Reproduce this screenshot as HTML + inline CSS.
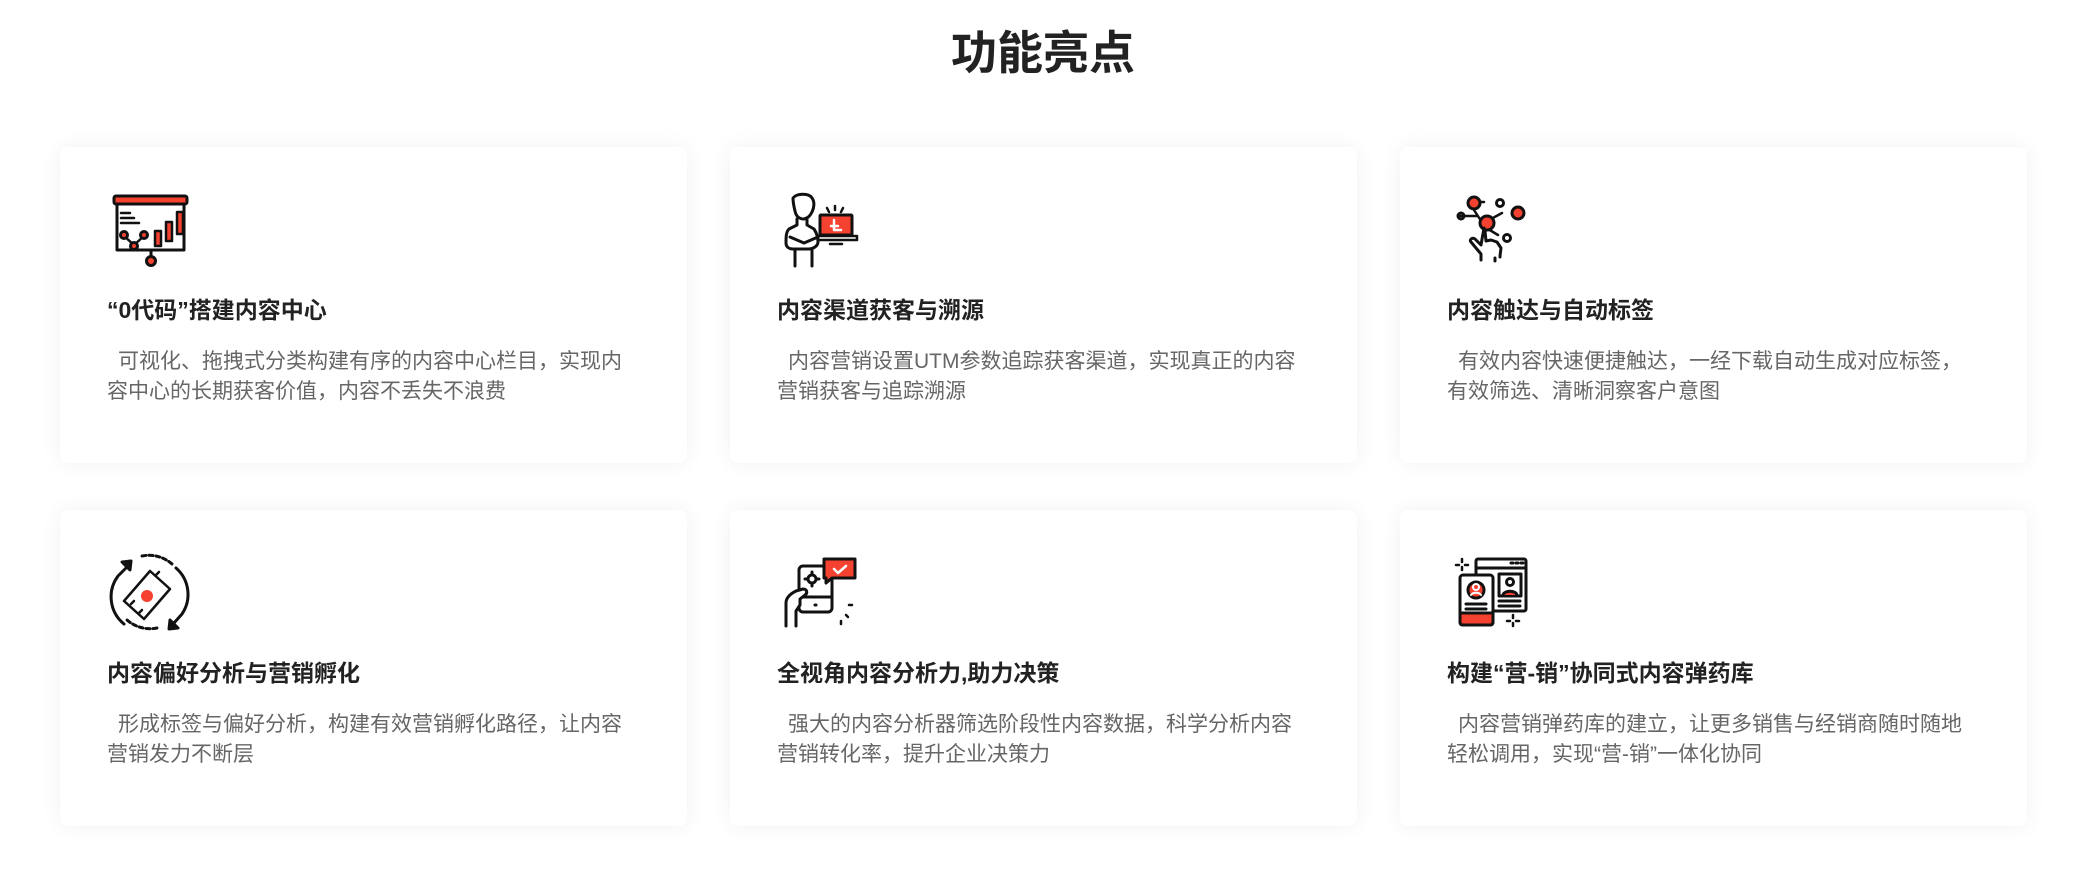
<!DOCTYPE html>
<html><head><meta charset="utf-8"><style>
*{margin:0;padding:0;box-sizing:border-box}
body{width:2086px;height:882px;background:#fff;position:relative;overflow:hidden;font-family:"Liberation Sans","Noto Sans CJK SC",sans-serif}
h1{position:absolute;left:0;width:2086px;top:24px;text-align:center;font-size:46px;font-weight:bold;color:#222;line-height:58px}
.card{position:absolute;width:627px;height:316px;background:#fff;border-radius:8px;box-shadow:0 0 22px rgba(0,0,0,0.06)}
.t{position:absolute;left:47px;top:148px;font-size:23px;font-weight:bold;color:#222;line-height:30px;white-space:nowrap}
.d{position:absolute;left:47px;top:200px;width:535px;font-size:21px;color:#666;line-height:30px;text-indent:11px}
svg.ic{position:absolute;left:0;top:0}
</style></head><body>
<h1>功能亮点</h1>
<div class="card" style="left:60px;top:147px"><div class="t">“0代码”搭建内容中心</div><div class="d">可视化、拖拽式分类构建有序的内容中心栏目，实现内容中心的长期获客价值，内容不丢失不浪费</div></div>
<div class="card" style="left:730px;top:147px"><div class="t">内容渠道获客与溯源</div><div class="d">内容营销设置UTM参数追踪获客渠道，实现真正的内容营销获客与追踪溯源</div></div>
<div class="card" style="left:1400px;top:147px"><div class="t">内容触达与自动标签</div><div class="d">有效内容快速便捷触达，一经下载自动生成对应标签，有效筛选、清晰洞察客户意图</div></div>
<div class="card" style="left:60px;top:510px"><div class="t">内容偏好分析与营销孵化</div><div class="d">形成标签与偏好分析，构建有效营销孵化路径，让内容营销发力不断层</div></div>
<div class="card" style="left:730px;top:510px"><div class="t">全视角内容分析力,助力决策</div><div class="d">强大的内容分析器筛选阶段性内容数据，科学分析内容营销转化率，提升企业决策力</div></div>
<div class="card" style="left:1400px;top:510px"><div class="t">构建“营-销”协同式内容弹药库</div><div class="d">内容营销弹药库的建立，让更多销售与经销商随时随地轻松调用，实现“营-销”一体化协同</div></div>

<svg class="ic" width="2086" height="882" fill="none" stroke="#111" stroke-width="3" stroke-linecap="round" stroke-linejoin="round">
<!-- icon1 -->
<rect x="114" y="196" width="73" height="8" rx="2" fill="#f5412f"/>
<path d="M117 204V250H184V204M151 250v7"/>
<path d="M121 213h9M121 218h13M121 223h18" stroke-width="2.5"/>
<path d="M124 236l10 9 10-9" stroke-width="2.5"/>
<circle cx="124" cy="235" r="3.5" fill="#f5412f"/><circle cx="134" cy="246" r="3.5" fill="#f5412f"/><circle cx="144" cy="235" r="3.5" fill="#f5412f"/>
<rect x="155" y="231" width="6" height="15" fill="#f5412f" stroke-width="2.5"/>
<rect x="166" y="222" width="6" height="19" fill="#f5412f" stroke-width="2.5"/>
<rect x="177" y="212" width="6" height="22" fill="#f5412f" stroke-width="2.5"/>
<circle cx="151" cy="261" r="4.5" fill="#f5412f"/>
<!-- icon2 -->
<path d="M793 198c4-5 16-5 19 0 3 4 2 10 0 14-2 4-4 6-8 7-5 0-8-3-9-8-1-4-2-9-2-13z"/>
<path d="M797 219v6l-8 4c-3 3-3 8-3 14 0 4 3 6 7 6h16c4 0 9-3 9-7 0-5-2-10-4-13l-7-4v-6"/>
<path d="M790 237l14 6M818 237l-14 6M795 249v17M812 249v17"/>
<rect x="820" y="215" width="32" height="20" rx="1" fill="#f5412f"/>
<path d="M834 220v10h7M831 226h7" stroke="#fff" stroke-width="2.5"/>
<path d="M818 236h39v4h-39zM830 244h12M827 208l2 4M835 206v4M843 208l-2 4" stroke-width="2.5"/>
<!-- icon3 -->
<path d="M1474 210l11 17M1460 216h17M1491 219l11-6M1488 229l10 6" stroke-width="2.5"/>
<path d="M1475 202h9" stroke-width="2.5"/>
<circle cx="1474" cy="203" r="6" fill="#f5412f"/><circle cx="1500" cy="203" r="3.5"/>
<circle cx="1461" cy="216" r="3"/><circle cx="1487" cy="223" r="7" fill="#f5412f"/>
<circle cx="1518" cy="213" r="6" fill="#f5412f"/><circle cx="1507" cy="238" r="3.5"/>
<path d="M1484 228l-3 17-6-6c-3-2-6 1-4 3l10 12v6M1485 231l1 10 5-1 6 2 4 6-1 8v1M1495 258v3"/>
<!-- icon4 -->
<path d="M124 624a35 35 0 0 1-6-48l8-8"/>
<path d="M122 562l9-1-1 9z" fill="#111"/>
<path d="M176 568a35 35 0 0 1 6 46l-8 9"/>
<path d="M178 628l-9 1 1-9z" fill="#111"/>
<path d="M142 556a35 35 0 0 1 30 8M157 628a35 35 0 0 1-30-8" stroke-dasharray="4 3"/>
<path d="M124 601l26-30 20 18-26 30z" stroke-width="2.5"/>
<path d="M131 604l3-3M156 575l3-3M139 613l3-3" stroke-width="2.5"/>
<circle cx="147" cy="596" r="6" fill="#f5412f" stroke="none"/>
<!-- icon5 -->
<rect x="799" y="566" width="33" height="46" rx="4"/>
<path d="M815 605h1M799 597h33"/>
<circle cx="812" cy="579" r="4"/><path d="M812 572v2M812 584v2M805 579h2M817 579h2"/>
<path d="M786 626v-23c0-5 4-9 10-12l7-2c4 0 5 4 2 6l-5 4v6l-4 6v15" fill="#fff"/>
<path d="M824 559h31v19h-23l-6 5v-5h-2z" fill="#f5412f"/>
<path d="M834 569l4 4 8-7" stroke="#fff" stroke-width="2.5"/>
<path d="M849 605h3M841 621v3M846 615l2 2" stroke-width="2.5"/>
<!-- icon6 -->
<rect x="1476" y="559" width="50" height="52" rx="2" fill="#fff"/>
<path d="M1476 568h50M1511 563h2M1516 563h2M1521 563h2"/>
<rect x="1499" y="574" width="22" height="22"/><circle cx="1510" cy="582" r="3.5"/><path d="M1503 595c1-5 13-5 14 0" fill="#f5412f"/>
<path d="M1499 601h21M1499 606h21"/>
<rect x="1460" y="575" width="33" height="50" rx="3" fill="#fff"/>
<path d="M1460 613h33v9c0 2-1 3-3 3h-27c-2 0-3-1-3-3z" fill="#f5412f"/>
<circle cx="1476" cy="590" r="8" fill="#f5412f"/><circle cx="1476" cy="587" r="3" stroke="#fff" stroke-width="2"/><path d="M1471 595c2-3 8-3 10 0" stroke="#fff" stroke-width="2"/>
<path d="M1466 604h20M1466 609h20"/>
<path d="M1462 559v3M1462 567v3M1456 565h3M1465 565h3M1513 615v3M1513 623v3M1507 621h3M1516 621h3" stroke-width="2.5"/>
</svg>
</body></html>
